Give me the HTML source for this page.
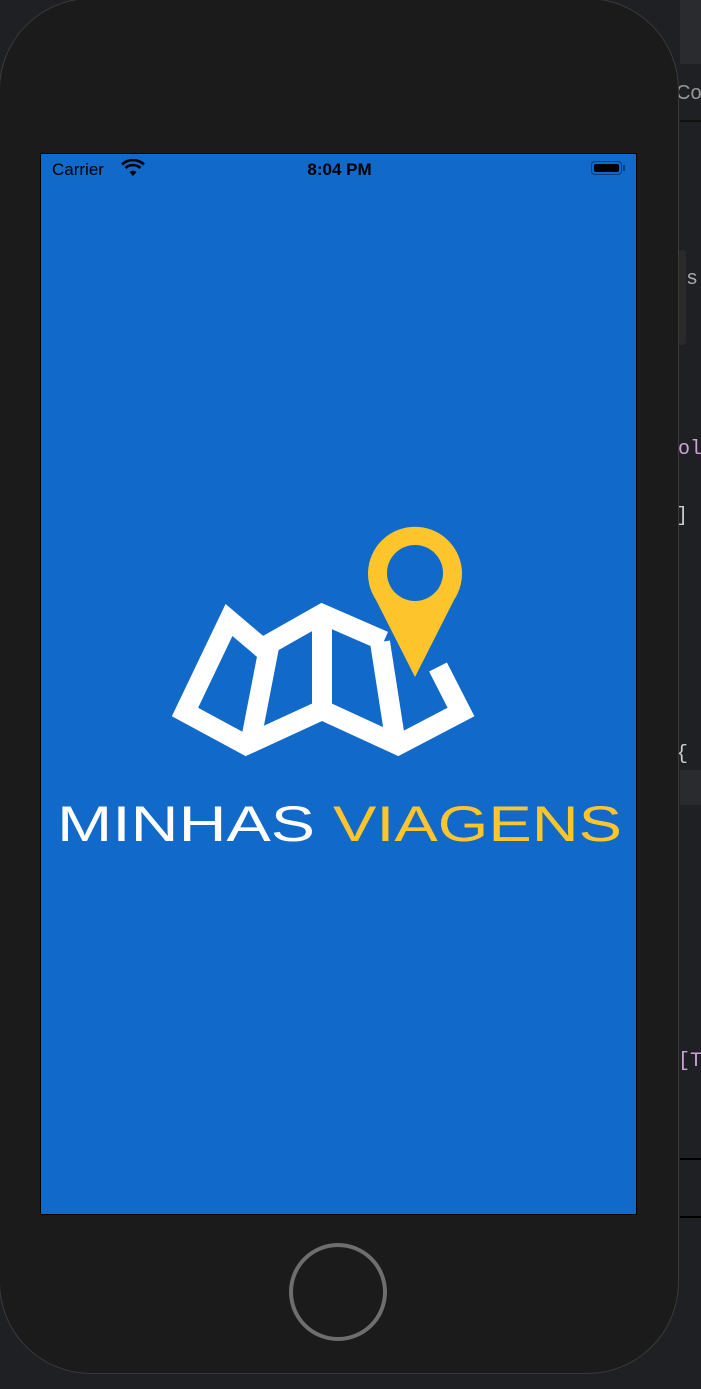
<!DOCTYPE html>
<html><head><meta charset="utf-8"><style>
html,body{margin:0;padding:0;width:701px;height:1389px;overflow:hidden;background:#1f2023;font-family:"Liberation Sans",sans-serif}
.phone{position:absolute;left:-1px;top:-2px;width:680px;height:1376px;border-radius:92px;background:#1b1b1b;border:1px solid #3a3a3a;box-sizing:border-box}
.screen{position:absolute;left:40px;top:153px;width:597px;height:1062px;background:#1169c9;border:1px solid #000;box-sizing:border-box}
.side{position:absolute;color:#c9a3d6;font-family:"Liberation Mono",monospace;font-size:20px}
</style></head><body>
<div style="position:absolute;left:680px;top:0;width:21px;height:64px;background:#2a2b2e"></div>
<div style="position:absolute;left:676px;top:82px;color:#999;font-size:20px">Co</div>
<div style="position:absolute;left:680px;top:120px;width:21px;height:2px;background:#111"></div>
<div style="position:absolute;left:676px;top:250px;width:10px;height:95px;background:#2a2a2a;border-radius:4px"></div>
<div class="side" style="left:686px;top:268px;color:#aaa">s</div>
<div class="side" style="left:678px;top:438px">ol</div>
<div class="side" style="left:676px;top:505px;color:#ccc">]</div>
<div class="side" style="left:676px;top:743px;color:#ccc">{</div>
<div style="position:absolute;left:680px;top:770px;width:21px;height:35px;background:#2a2b2e"></div>
<div class="side" style="left:678px;top:1050px">[T</div>
<div style="position:absolute;left:680px;top:1158px;width:21px;height:2px;background:#000"></div>
<div style="position:absolute;left:680px;top:1216px;width:21px;height:2px;background:#000"></div>
<div class="phone"></div>
<div class="screen">
<div style="position:absolute;left:11px;top:6px;font-size:17px;color:#000">Carrier</div>
<svg style="position:absolute;left:80px;top:5px" width="24" height="18" viewBox="0 0 24 18"><path d="M12 17l-3.5-4a5 5 0 0 1 7 0z" fill="#000"/><path d="M4.5 9a11 11 0 0 1 15 0M1 5.5a16 16 0 0 1 22 0" stroke="#000" stroke-width="2.6" fill="none"/></svg>
<div style="position:absolute;left:0;width:597px;top:6px;text-align:center;font-size:17px;font-weight:bold;color:#000">8:04 PM</div>
<div style="position:absolute;left:550px;top:7px;width:31px;height:14px;border:1.5px solid #0a3e7a;border-radius:4px;box-sizing:border-box;padding:2px"><div style="width:100%;height:100%;background:#000;border-radius:2px"></div></div>
<div style="position:absolute;left:582px;top:11px;width:2px;height:6px;background:#0a3e7a"></div>
</div>
<svg style="position:absolute;left:0;top:0" width="701" height="1389">
<g fill="none" stroke="#fff" stroke-width="20" stroke-linejoin="miter">
<polyline points="384,641 322,614 262,648 229,620 185,712 246,745 322,710 398,745 461,712 438,667"/>
<line x1="270" y1="642" x2="250" y2="745"/>
<line x1="322" y1="612" x2="322" y2="712"/>
<line x1="380" y1="642" x2="396" y2="745"/>
</g>
<path d="M415 677 L376 600 A47 47 0 1 1 454 600 Z" fill="#fdc52b"/>
<circle cx="415" cy="573" r="28" fill="#1169c9"/>
<text x="57" y="841" font-size="50" font-family="Liberation Sans,sans-serif" textLength="258" lengthAdjust="spacingAndGlyphs" fill="#fff">MINHAS</text>
<text x="333" y="841" font-size="50" font-family="Liberation Sans,sans-serif" textLength="289" lengthAdjust="spacingAndGlyphs" fill="#fdc52b">VIAGENS</text>
<circle cx="338" cy="1292" r="47" fill="none" stroke="#6e6e6e" stroke-width="4"/>
</svg>
</body></html>
